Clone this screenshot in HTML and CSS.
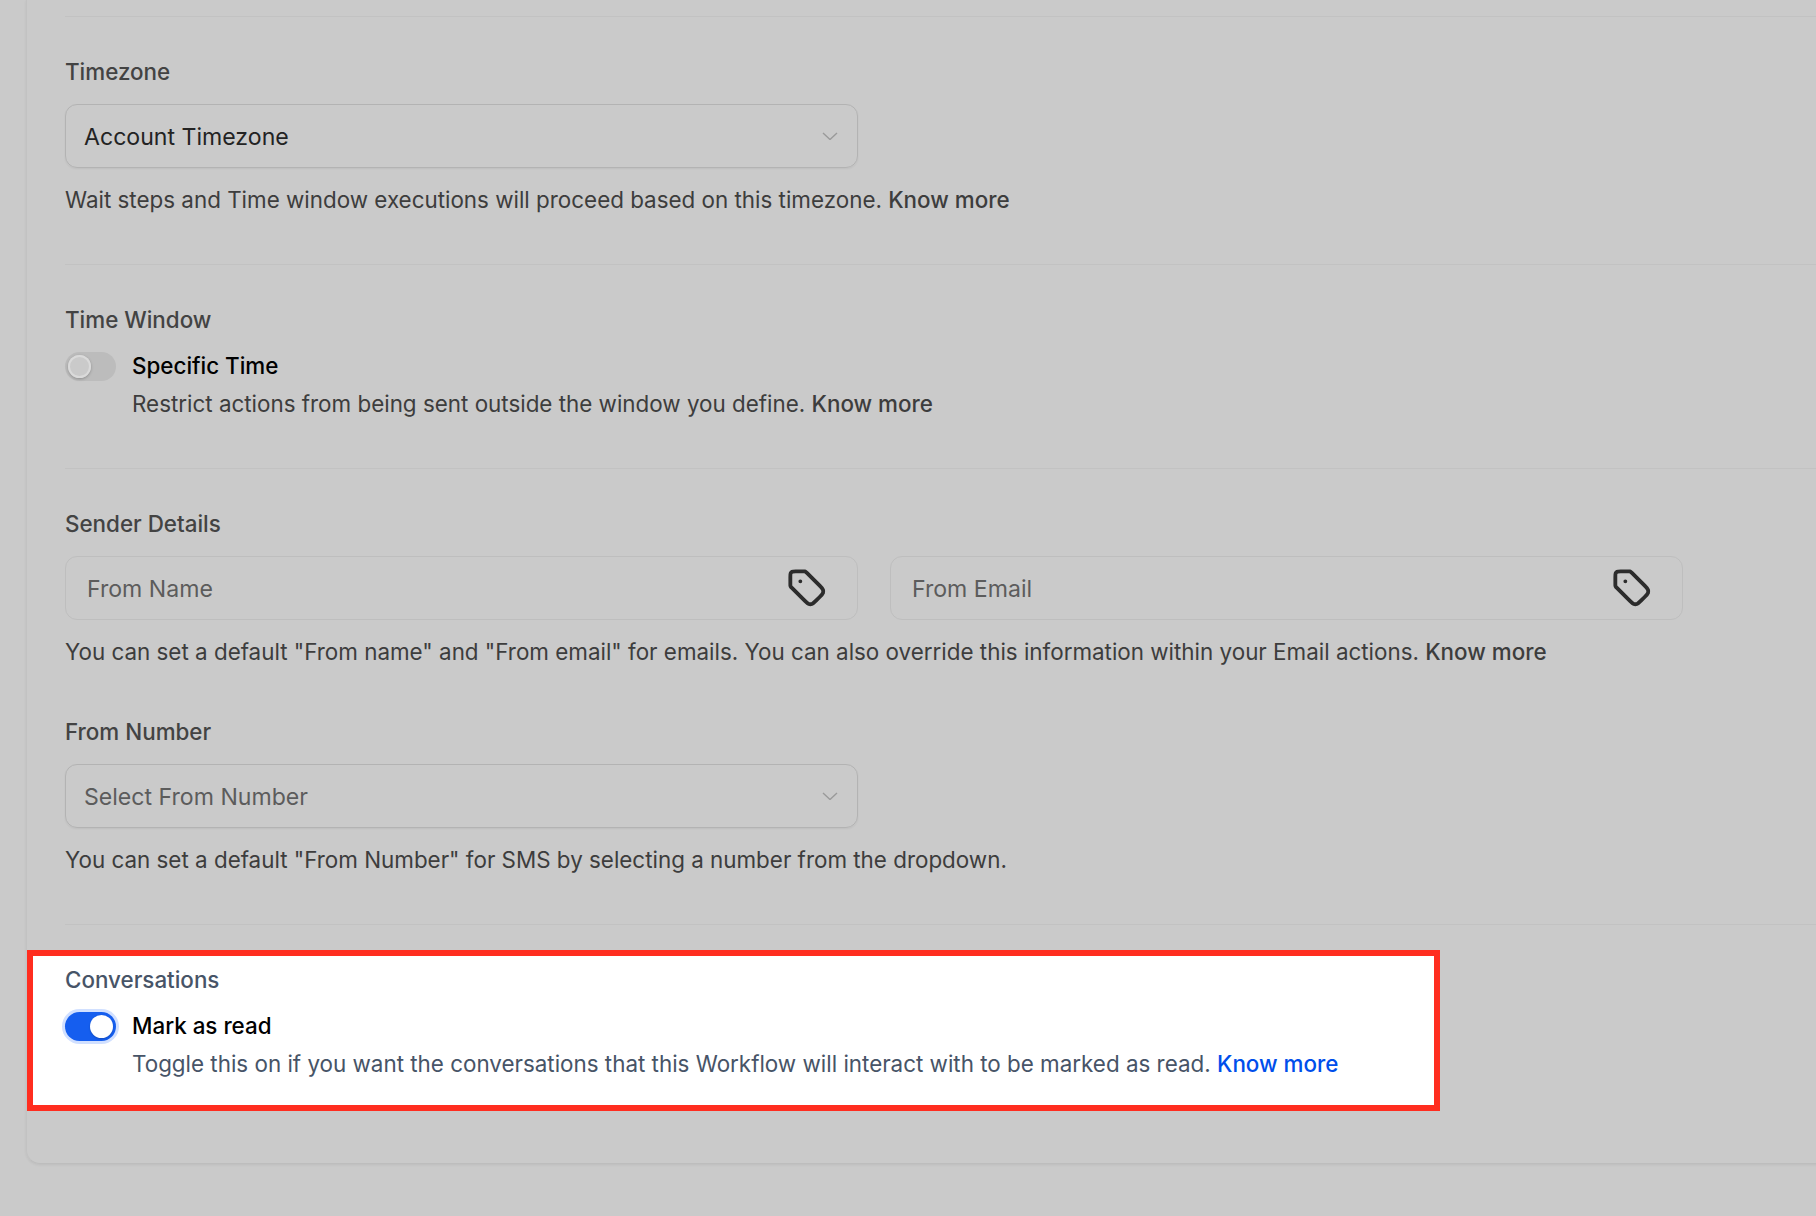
FILE: index.html
```html
<!DOCTYPE html>
<html lang="en">
<head>
<meta charset="utf-8">
<title>Workflow settings</title>
<link rel="stylesheet" href="styles.css">
</head>
<body>
<main class="card">
  <section class="section">
    <div class="label">Timezone</div>
    <div class="field select">
      <span class="value">Account Timezone</span>
      <svg class="chevron" viewBox="0 0 16 8" fill="none"><path d="M1 1l7 6.5L15 1"/></svg>
    </div>
    <p class="help">Wait steps and Time window executions will proceed based on this timezone. <a class="link">Know more</a></p>
  </section>

  <section class="section">
    <div class="label">Time Window</div>
    <div class="toggle-row">
      <span class="toggle"><span class="knob"></span></span>
      <div class="toggle-text">
        <div class="toggle-title">Specific Time</div>
        <p class="toggle-help">Restrict actions from being sent outside the window you define. <a class="link">Know more</a></p>
      </div>
    </div>
  </section>

  <section class="section section-last">
    <div class="label">Sender Details</div>
    <div class="field-pair">
      <div class="field input">
        <span class="placeholder">From Name</span>
        <svg class="tag" viewBox="0 0 24 24" fill="none"><path d="M8 8h.01M2 5.2v4.475c0 .489 0 .733.055.964.05.204.13.4.24.578.123.201.296.374.642.72l7.669 7.669c1.188 1.188 1.782 1.782 2.467 2.004a3 3 0 0 0 1.854 0c.685-.222 1.28-.816 2.467-2.004l2.212-2.212c1.188-1.188 1.782-1.782 2.004-2.467a3 3 0 0 0 0-1.854c-.222-.685-.816-1.28-2.004-2.467l-7.669-7.669c-.346-.346-.519-.519-.72-.642a2 2 0 0 0-.579-.24C10.409 2 10.165 2 9.676 2H5.2c-1.12 0-1.68 0-2.108.218a2 2 0 0 0-.874.874C2 3.52 2 4.08 2 5.2Z"/></svg>
      </div>
      <div class="field input">
        <span class="placeholder">From Email</span>
        <svg class="tag" viewBox="0 0 24 24" fill="none"><path d="M8 8h.01M2 5.2v4.475c0 .489 0 .733.055.964.05.204.13.4.24.578.123.201.296.374.642.72l7.669 7.669c1.188 1.188 1.782 1.782 2.467 2.004a3 3 0 0 0 1.854 0c.685-.222 1.28-.816 2.467-2.004l2.212-2.212c1.188-1.188 1.782-1.782 2.004-2.467a3 3 0 0 0 0-1.854c-.222-.685-.816-1.28-2.004-2.467l-7.669-7.669c-.346-.346-.519-.519-.72-.642a2 2 0 0 0-.579-.24C10.409 2 10.165 2 9.676 2H5.2c-1.12 0-1.68 0-2.108.218a2 2 0 0 0-.874.874C2 3.52 2 4.08 2 5.2Z"/></svg>
      </div>
    </div>
    <p class="help">You can set a default "From name" and "From email" for emails. You can also override this information within your Email actions. <a class="link">Know more</a></p>
    <div class="label label-next">From Number</div>
    <div class="field select">
      <span class="select-placeholder">Select From Number</span>
      <svg class="chevron" viewBox="0 0 16 8" fill="none"><path d="M1 1l7 6.5L15 1"/></svg>
    </div>
    <p class="help">You can set a default "From Number" for SMS by selecting a number from the dropdown.</p>
  </section>

  <section class="highlight">
    <div class="label">Conversations</div>
    <div class="toggle-row">
      <span class="toggle on"><span class="knob"></span></span>
      <div class="toggle-text">
        <div class="toggle-title">Mark as read</div>
        <p class="toggle-help">Toggle this on if you want the conversations that this Workflow will interact with to be marked as read. <a class="link">Know more</a></p>
      </div>
    </div>
  </section>
</main>
</body>
</html>
```

FILE: styles.css
```css
* { box-sizing: border-box; }

html, body {
  margin: 0;
  height: 1216px;
  overflow: hidden;
  background: #cacaca;
}

body {
  font-family: Inter, "Noto Sans", sans-serif;
  font-size: 22.4px;
  line-height: 28px;
  color: #3d3d3d;
}

.card {
  margin: 0 -20px 0 26px;
  padding: 16px 0 52px 38px;
  border-left: 1px solid #c2c2c2;
  border-bottom: 1px solid #bdbdbd;
  border-bottom-left-radius: 14px;
  box-shadow: 0 1px 3px rgba(0, 0, 0, 0.07);
}

.section {
  border-top: 1px solid #c2c2c2;
  padding: 41px 0 50px;
}

.section-last {
  border-bottom: 1px solid #c2c2c2;
}

.label {
  font-weight: 500;
  color: #434343;
  margin-bottom: 18px;
}

.label-next {
  margin-top: 52px;
}

.field {
  width: 793px;
  height: 64px;
  border-radius: 12px;
  display: flex;
  align-items: center;
  justify-content: space-between;
}

.select {
  padding: 0 19px 0 18px;
  border: 1px solid #b3b3b3;
  box-shadow: 0 1px 2px rgba(0, 0, 0, 0.06);
}

.input {
  padding: 0 30px 0 21px;
  border: 1px solid #bebebe;
}

.field-pair {
  display: flex;
  gap: 32px;
}

.value, .placeholder, .select-placeholder {
  font-size: 23.1px;
  padding-top: 2px;
}

.value { color: #232323; }
.placeholder, .select-placeholder { color: #5c5c5c; }

.chevron {
  width: 16px;
  height: 8px;
}

.chevron path {
  stroke: #9a9a9a;
  stroke-width: 1.4;
}

.tag {
  width: 40px;
  height: 40px;
}

.tag path {
  stroke: #2c2c2c;
  stroke-width: 2.3;
  stroke-linecap: round;
  stroke-linejoin: round;
}

.help, .toggle-help {
  margin: 0;
}

.help { margin-top: 18px; }
.toggle-help { margin-top: 10px; }

.link {
  font-weight: 500;
}

.toggle-row {
  display: flex;
  gap: 16px;
  align-items: flex-start;
}

.toggle {
  width: 51px;
  height: 29px;
  border-radius: 15px;
  background: #bcbcbc;
  padding: 3px;
  flex: none;
  display: flex;
}

.knob {
  width: 23px;
  height: 23px;
  border-radius: 50%;
  background: #cacaca;
  box-shadow: inset 0 0 0 2px #dadada, 0 1px 3px rgba(0, 0, 0, 0.25);
}

.toggle-title {
  font-weight: 500;
  color: #000;
}

.highlight {
  margin: 25px 0 0 -38px;
  width: 1413px;
  height: 161px;
  padding: 10px 0 0 32px;
  border: 6px solid #ff2d1f;
  background: #fff;
  color: #475467;
}

.highlight .label {
  color: #475467;
  margin-bottom: 18px;
}

.toggle.on {
  background: #155eef;
  justify-content: flex-end;
  box-shadow: 0 0 0 3px #d1e0ff;
}

.toggle.on .knob {
  background: #fff;
  box-shadow: 0 1px 2px rgba(0, 0, 0, 0.2);
}

.highlight .link {
  color: #004eeb;
}
```
